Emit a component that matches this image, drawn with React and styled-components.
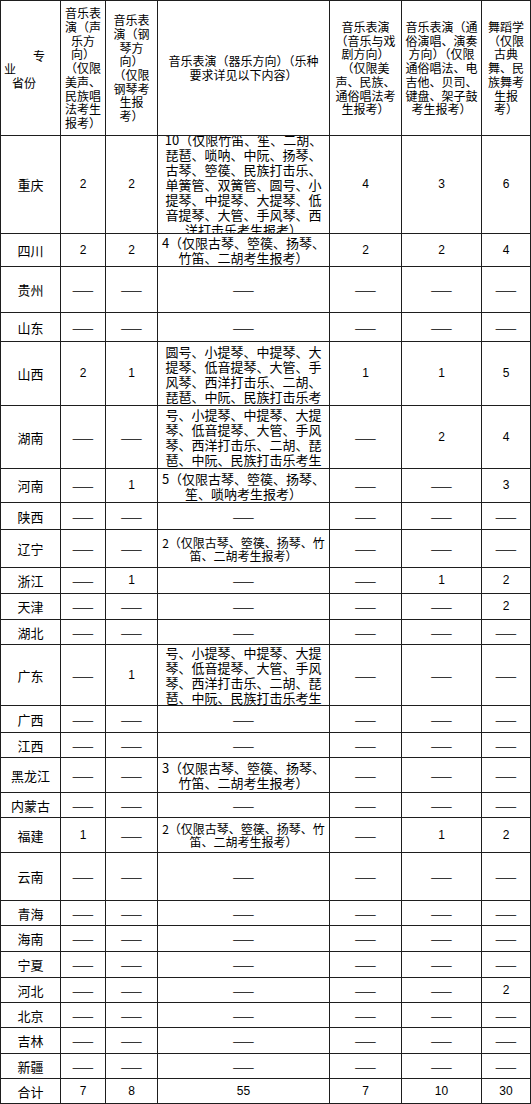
import React from "react";
import styled, { createGlobalStyle } from "styled-components";

const GlobalStyle = createGlobalStyle`
  html, body {
    margin: 0;
    padding: 0;
    background-color: #fff;
  }
  body {
    font-family: "Noto Sans CJK SC", "Noto Sans", sans-serif;
    color: #000;
  }
`;

const D = "——";

// 内容宽度（不含 1px 表格线）
const COLS = [59, 44, 51, 171, 71, 79, 48];

const headers = [
  ["音乐表", "演（声", "乐方", "向）", "（仅限", "美声、", "民族唱", "法考生", "报考）"],
  ["音乐表", "演（钢", "琴方", "向）", "（仅限", "钢琴考", "生报", "考）"],
  ["音乐表演（器乐方向）（乐种", "要求详见以下内容）"],
  ["音乐表演", "（音乐与戏", "剧方向）", "（仅限美", "声、民族、", "通俗唱法考", "生报考）"],
  ["音乐表演（通", "俗演唱、演奏", "方向）（仅限", "通俗唱法、电", "吉他、贝司、", "键盘、架子鼓", "考生报考）"],
  ["舞蹈学", "（仅限", "古典", "舞、民", "族舞考", "生报", "考）"],
];

const small2 = { small: true, lines: ["2（仅限古琴、箜篌、扬琴、竹", "笛、二胡考生报考）"] };

const rows = [
  { name: "重庆", h: 97, cells: ["2", "2", { lines: ["10（仅限竹笛、笙、二胡、", "琵琶、唢呐、中阮、扬琴、", "古琴、箜篌、民族打击乐、", "单簧管、双簧管、圆号、小", "提琴、中提琴、大提琴、低", "音提琴、大管、手风琴、西", "洋打击乐考生报考）"] }, "4", "3", "6"] },
  { name: "四川", h: 32, cells: ["2", "2", { lines: ["4（仅限古琴、箜篌、扬琴、", "竹笛、二胡考生报考）"] }, "2", "2", "4"] },
  { name: "贵州", h: 45, cells: [D, D, D, D, D, D] },
  { name: "山东", h: 28, cells: [D, D, D, D, D, D] },
  { name: "山西", h: 63, cells: ["2", "1", { lines: ["圆号、小提琴、中提琴、大", "提琴、低音提琴、大管、手", "风琴、西洋打击乐、二胡、", "琵琶、中阮、民族打击乐考"] }, "1", "1", "5"] },
  { name: "湖南", h: 62, cells: [D, D, { lines: ["号、小提琴、中提琴、大提", "琴、低音提琴、大管、手风", "琴、西洋打击乐、二胡、琵", "琶、中阮、民族打击乐考生"] }, D, "2", "4"] },
  { name: "河南", h: 33, cells: [D, "1", { lines: ["5（仅限古琴、箜篌、扬琴、", "笙、唢呐考生报考）"] }, D, D, "3"] },
  { name: "陕西", h: 26, cells: [D, D, D, D, D, D] },
  { name: "辽宁", h: 37, cells: [D, D, small2, D, D, D] },
  { name: "浙江", h: 25, cells: [D, "1", D, D, "1", "2"] },
  { name: "天津", h: 25, cells: [D, D, D, D, D, "2"] },
  { name: "湖北", h: 24, cells: [D, D, D, D, D, D] },
  { name: "广东", h: 60, cells: [D, "1", { lines: ["号、小提琴、中提琴、大提", "琴、低音提琴、大管、手风", "琴、西洋打击乐、二胡、琵", "琶、中阮、民族打击乐考生"] }, D, D, D] },
  { name: "广西", h: 26, cells: [D, D, D, D, D, D] },
  { name: "江西", h: 24, cells: [D, D, D, D, D, D] },
  { name: "黑龙江", h: 34, cells: [D, D, { lines: ["3（仅限古琴、箜篌、扬琴、", "竹笛、二胡考生报考）"] }, D, D, D] },
  { name: "内蒙古", h: 24, cells: [D, D, D, D, D, D] },
  { name: "福建", h: 34, cells: ["1", D, small2, D, "1", "2"] },
  { name: "云南", h: 47, cells: [D, D, D, D, D, D] },
  { name: "青海", h: 24, cells: [D, D, D, D, D, D] },
  { name: "海南", h: 25, cells: [D, D, D, D, D, D] },
  { name: "宁夏", h: 25, cells: [D, D, D, D, D, D] },
  { name: "河北", h: 24, cells: [D, D, D, D, D, "2"] },
  { name: "北京", h: 24, cells: [D, D, D, D, D, D] },
  { name: "吉林", h: 25, cells: [D, D, D, D, D, D] },
  { name: "新疆", h: 24, cells: [D, D, D, D, D, D] },
  { name: "合计", h: 24, cells: ["7", "8", "55", "7", "10", "30"] },
];

const HEADER_H = 134;
const isNumber = (s) => /^\d+$/.test(s);

const App = () => {
  const rowTemplate = [HEADER_H, ...rows.map((r) => r.h)].map((h) => `${h}px`).join(" ");

  return (
    <>
      <GlobalStyle />
      <Sheet $rows={rowTemplate}>
        <CornerCell>
          <CornerLine $indent={32}>专</CornerLine>
          <CornerLine $indent={3}>业</CornerLine>
          <CornerLine $indent={11}>省份</CornerLine>
        </CornerCell>
        {headers.map((lines, i) => (
          <HeadCell key={`h${i}`}>
            {lines.map((l, j) => (
              <Line key={j}>{l}</Line>
            ))}
          </HeadCell>
        ))}

        {rows.map((row) => (
          <React.Fragment key={row.name}>
            <Cell>{row.name}</Cell>
            {row.cells.map((c, i) =>
              typeof c === "string" ? (
                isNumber(c) ? (
                  <NumCell key={i}>{c}</NumCell>
                ) : (
                  <Cell key={i}>{c}</Cell>
                )
              ) : (
                <Cell key={i} $small={c.small} $lh={c.small ? 13 : 15}>
                  {c.lines.map((l, j) => (
                    <Line key={j}>{l}</Line>
                  ))}
                </Cell>
              )
            )}
          </React.Fragment>
        ))}
      </Sheet>
    </>
  );
};

export default App;

const Sheet = styled.div`
  display: grid;
  grid-template-columns: ${COLS.map((w) => `${w}px`).join(" ")};
  grid-template-rows: ${(p) => p.$rows};
  gap: 1px;
  padding: 1px;
  width: 531px;
  box-sizing: border-box;
  background-color: #1e1e1e;
`;

const Cell = styled.div`
  background-color: #fff;
  display: flex;
  flex-direction: column;
  align-items: center;
  justify-content: center;
  overflow: hidden;
  text-align: center;
  font-size: ${(p) => (p.$small ? 12 : 13)}px;
  line-height: ${(p) => p.$lh || 15}px;
  white-space: nowrap;
`;

const NumCell = styled(Cell)`
  font-family: "Liberation Sans", Arial, sans-serif;
  font-size: 12px;
`;

const HeadCell = styled(Cell)`
  font-size: 12px;
  line-height: 13.7px;
`;

const CornerCell = styled(Cell)`
  align-items: flex-start;
  text-align: left;
  font-size: 12px;
  line-height: 13.5px;
  padding-top: 2px;
`;

const CornerLine = styled.div`
  padding-left: ${(p) => p.$indent}px;
`;

const Line = styled.div`
  white-space: nowrap;
`;
